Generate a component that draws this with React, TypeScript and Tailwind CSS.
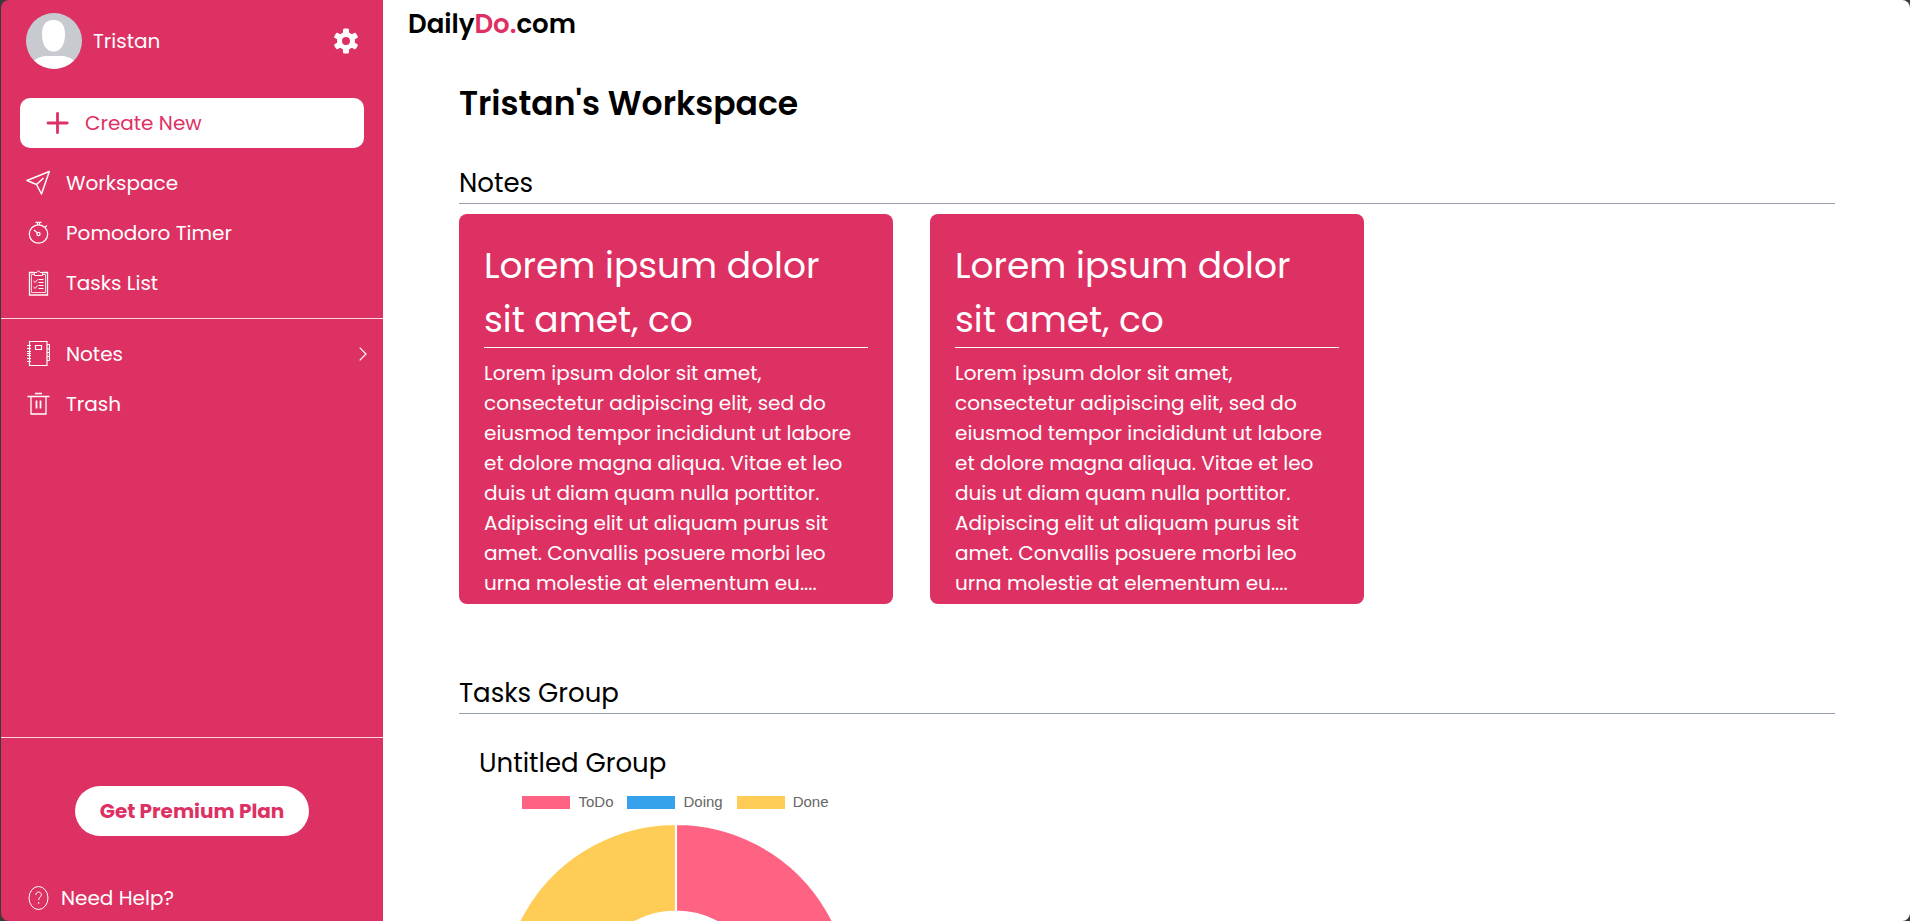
import type { ReactNode } from "react";

const notes = [
  { id: 1, title: "Lorem ipsum dolor sit amet, co" },
  { id: 2, title: "Lorem ipsum dolor sit amet, co" },
];

const noteBody =
  "Lorem ipsum dolor sit amet, consectetur adipiscing elit, sed do eiusmod tempor incididunt ut labore et dolore magna aliqua. Vitae et leo duis ut diam quam nulla porttitor. Adipiscing elit ut aliquam purus sit amet. Convallis posuere morbi leo urna molestie at elementum eu....";

function Icon({ children }: { children: ReactNode }) {
  return (
    <svg viewBox="0 0 24 26" className="h-[26px] w-6 shrink-0" fill="none" stroke="currentColor" strokeWidth="1" aria-hidden="true">
      {children}
    </svg>
  );
}

function PlaneIcon() {
  return (
    <Icon>
      <path d="M23.300 1.500 1 10.500l9.500 4L15.500 24z M10.500 14.500l7-6.500" strokeWidth="1.500" strokeLinejoin="round" />
    </Icon>
  );
}

function TimerIcon() {
  return (
    <Icon>
      <circle cx="12.500" cy="14" r="9.200" strokeWidth="1.200" />
      <path d="M9.500 2.300h6M11.500 2.500v2.300M13.500 2.500v2.300M19 7.300l1.900-1.900M8 10l3 2.500" strokeWidth="1.200" />
      <circle cx="12.500" cy="14" r="1.600" strokeWidth="1.200" />
    </Icon>
  );
}

function ListIcon() {
  return (
    <Icon>
      <path d="M8.500 2.500h-5v22.500h18v-22.500h-5" strokeWidth="1.300" />
      <path d="M8 4.500H5.500v18h14v-18H17" strokeWidth="0.800" />
      <path d="M8.500 2.500v3h8v-3h-2.500a1.500 1.500 0 0 0-3 0z" />
      <path d="m7.500 11 1.700 1.500 2.300-3M7.500 17l1.700 1.500 2.300-3M12.500 9.500h5M12.500 12.500h5M12.500 15.500h5M12.500 18.500h5" strokeWidth="1" />
    </Icon>
  );
}

function NotebookIcon() {
  return (
    <Icon>
      <path d="M3.500.500h17.500v24H3.500z" strokeWidth="1.200" />
      <path d="M9.500 4.500h6v4h-6z" strokeWidth="1.200" />
      <path d="M1 4.500h4M1 7.500h4M1 10.500h4M1 12.500h4M1 14.500h4M1 17.500h4M1 20.500h4" />
      <path d="M21 3.500h2.500v16H21M21 8h2.500M21 11.500h2.500M21 15.500h2.500" strokeWidth="1.200" />
    </Icon>
  );
}

function TrashIcon() {
  return (
    <Icon>
      <path d="M1.500 5.500h22M9 2.500h7M5 5.500v17.500h15V5.500" strokeWidth="1.300" />
      <path d="M10.500 9.500v8M14.500 9.500v8" strokeWidth="1.700" />
    </Icon>
  );
}

function NavItem({ icon, label, arrow = false }: { icon: ReactNode; label: string; arrow?: boolean }) {
  return (
    <a href="#" className="flex h-[50px] items-center pr-4 pl-[25px]">
      {icon}
      <span className="ml-4">{label}</span>
      {arrow && (
        <svg viewBox="0 0 8 14" className="ml-auto h-[14px] w-2" fill="none" stroke="currentColor" strokeWidth="1.200" aria-hidden="true">
          <path d="m.700.700 6.300 6.300-6.300 6.300" />
        </svg>
      )}
    </a>
  );
}

function Sidebar() {
  return (
    <aside className="flex w-[382px] shrink-0 flex-col rounded-l-lg bg-[#de3163] text-xl text-white">
      <div className="flex h-[82px] items-center px-[25px]">
        <svg viewBox="0 0 56 56" className="size-14" aria-hidden="true">
          <defs>
            <clipPath id="avatar">
              <circle cx="28" cy="28" r="28" />
            </clipPath>
          </defs>
          <g clipPath="url(#avatar)">
            <path d="M0 0h56v56H0z" fill="#c7cbd0" />
            <path d="M27.500 7C35 7 39 12 39 21c0 10-4 17.500-11.500 17.500S16 31 16 21C16 12 20 7 27.500 7zM6 50c4-5 9-7 15-7h14c6 0 11 2 15 7v8H6z" fill="#fff" />
          </g>
        </svg>
        <span className="ml-[11px]">Tristan</span>
        <button type="button" aria-label="Settings" className="ml-auto">
          <svg viewBox="0 0 24 26" className="h-[26px] w-6" aria-hidden="true">
            <g transform="translate(12 13)" fill="currentColor">
              <circle r="9" />
              <rect x="-3" y="-12.500" width="6" height="25" rx="1.500" />
              <rect x="-3" y="-12.500" width="6" height="25" rx="1.500" transform="rotate(60)" />
              <rect x="-3" y="-12.500" width="6" height="25" rx="1.500" transform="rotate(120)" />
            </g>
            <circle cx="12" cy="13" r="4" fill="#de3163" />
          </svg>
        </button>
      </div>
      <button type="button" className="mx-[19px] mt-4 flex h-[50px] items-center rounded-[10px] bg-white pl-[25px] text-[#de3163]">
        <svg viewBox="0 0 24 24" className="size-6" fill="none" stroke="currentColor" strokeWidth="2.800" strokeLinecap="round" aria-hidden="true">
          <path d="M12.500 2.500v19.200M3 12h19.200" />
        </svg>
        <span className="ml-4">Create New</span>
      </button>
      <nav className="mt-[10px]">
        <div className="border-b border-white/80 pb-[10px]">
          <NavItem icon={<PlaneIcon />} label="Workspace" />
          <NavItem icon={<TimerIcon />} label="Pomodoro Timer" />
          <NavItem icon={<ListIcon />} label="Tasks List" />
        </div>
        <div className="pt-[10px]">
          <NavItem icon={<NotebookIcon />} label="Notes" arrow />
          <NavItem icon={<TrashIcon />} label="Trash" />
        </div>
      </nav>
      <div className="mt-auto flex flex-col border-t border-white/80 pt-12">
        <button type="button" className="h-[50px] self-center rounded-full bg-white px-[25px] font-bold text-[#de3163]">
          Get Premium Plan
        </button>
        <a href="#" className="mt-[38px] flex h-[47px] items-center pl-[25px]">
          <Icon>
            <ellipse cx="12.500" cy="13" rx="9.500" ry="11.500" />
            <path d="M9.800 10c0-4 5.600-3.800 5.600-.300 0 2.400-2.700 2.200-2.700 5.300M12.700 17v1.800" />
          </Icon>
          <span className="ml-[11px]">Need Help?</span>
        </a>
      </div>
    </aside>
  );
}

const legend = [
  { label: "ToDo", swatch: "bg-[#ff6384]" },
  { label: "Doing", swatch: "bg-[#36a2eb]" },
  { label: "Done", swatch: "bg-[#ffcd56]" },
];

function TaskChart() {
  return (
    <figure className="mt-[31px] ml-5 w-[393px]">
      <figcaption className="text-[26px] leading-9">Untitled Group</figcaption>
      <ul className="mt-[13px] flex justify-center gap-[14px] font-['Liberation_Sans',Arial,sans-serif] text-[15px] leading-4 text-[#666]">
        {legend.map((item) => (
          <li key={item.label} className="flex items-center gap-2">
            <span className={`h-[13px] w-12 ${item.swatch}`} />
            {item.label}
          </li>
        ))}
      </ul>
      <svg viewBox="0 0 340 340" className="mx-auto mt-[14px] size-[350px]" stroke="#fff" strokeWidth="2" role="img" aria-label="Task status">
        <path d="M170 0A170 170 0 0 1 317.200 255L243.600 212.500A85 85 0 0 0 170 85z" fill="#ff6384" />
        <path d="M317.200 255A170 170 0 0 1 22.800 255L96.400 212.500A85 85 0 0 0 243.600 212.500z" fill="#36a2eb" />
        <path d="M22.800 255A170 170 0 0 1 170 0V85A85 85 0 0 0 96.400 212.500z" fill="#ffcd56" />
      </svg>
    </figure>
  );
}

export default function App() {
  return (
    <div className="flex h-screen overflow-hidden bg-[#3a3a3a] pl-px font-[Poppins,Inter,sans-serif]">
      <Sidebar />
      <main className="min-w-0 flex-1 overflow-hidden rounded-r-lg bg-white pl-[25px] text-black">
        <div className="pt-1 text-[26px] leading-10 font-semibold">
          Daily<span className="text-[#de3163]">Do.</span>com
        </div>
        <div className="mr-[75px] ml-[51px]">
          <h1 className="mt-[35px] text-[33px] leading-[50px] font-semibold">Tristan's Workspace</h1>
          <section className="mt-[34px]">
            <h2 className="border-b border-gray-400 text-[26px] leading-10">Notes</h2>
            <div className="mt-[10px] flex gap-[37px]">
              {notes.map((note) => (
                <article key={note.id} className="w-[434px] rounded-lg bg-[#de3163] px-[25px] pt-[25px] pb-[6px] text-white">
                  <h3 className="border-b border-white text-[36px] leading-[54px]">{note.title}</h3>
                  <p className="mt-[10px] text-xl leading-[30px]">{noteBody}</p>
                </article>
              ))}
            </div>
          </section>
          <section className="mt-[69px]">
            <h2 className="border-b border-gray-400 text-[26px] leading-10">Tasks Group</h2>
            <TaskChart />
          </section>
        </div>
      </main>
    </div>
  );
}
